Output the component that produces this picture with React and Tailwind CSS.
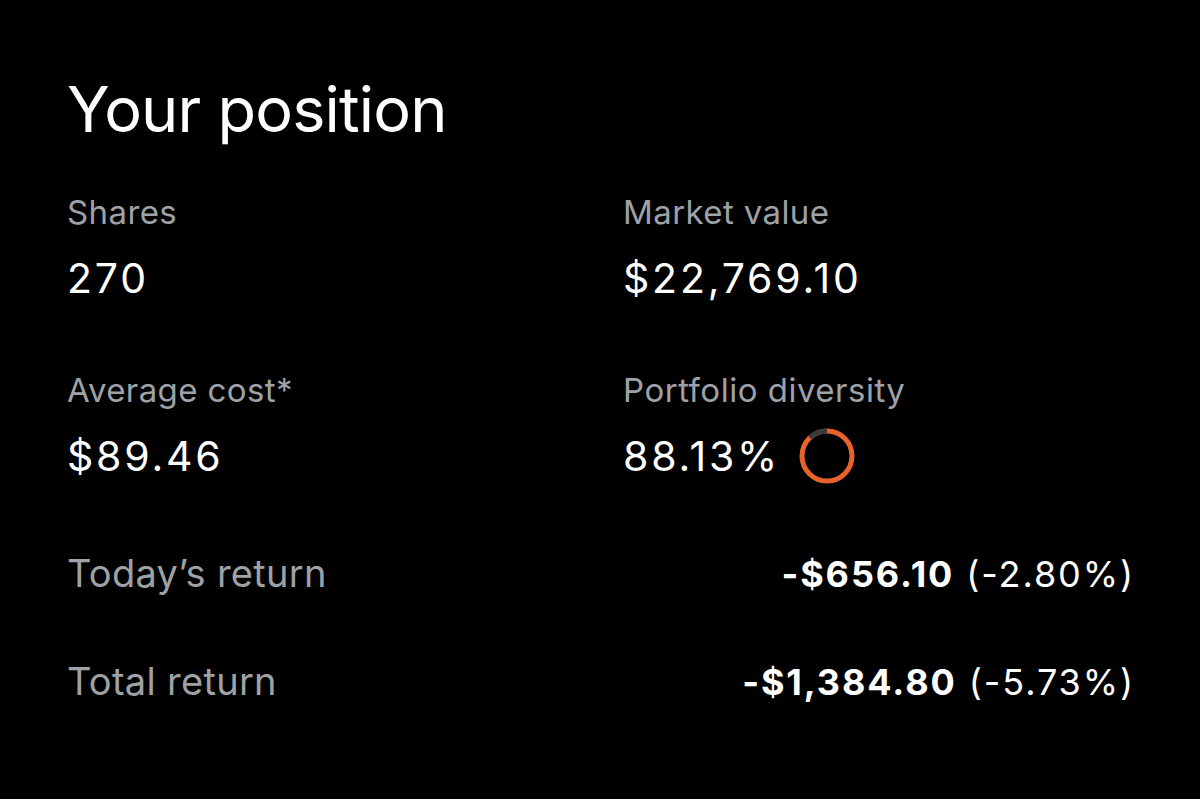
import React from 'react';

const font = { fontFamily: 'Inter, "Noto Sans", sans-serif' };

function DiversityRing() {
  return (
    <svg width="56" height="56" viewBox="0 0 56 56" className="shrink-0">
      <circle cx="28" cy="28" r="25" fill="none" stroke="#e8622c" strokeWidth="5" />
      <path d="M10.95 9.72 A25 25 0 0 1 28 3" fill="none" stroke="#3b3b3b" strokeWidth="5" />
    </svg>
  );
}

function Stat({ label, children }) {
  return (
    <div>
      <div className="text-[33px] leading-none tracking-[0.4px] text-[#9ea2a7]">{label}</div>
      <div className="mt-[29px] text-[41px] leading-none tracking-[2.8px] text-white">{children}</div>
    </div>
  );
}

function ReturnRow({ label, amount, pct, className }) {
  return (
    <div className={`flex items-baseline justify-between ${className}`}>
      <span className="text-[38px] leading-none tracking-[0.3px] text-[#9ea2a7]">{label}</span>
      <span className="text-[36px] leading-none tracking-[1.9px] text-white">
        <span className="font-bold">{amount}</span> {pct}
      </span>
    </div>
  );
}

export default function App() {
  return (
    <div className="min-h-[799px] w-full bg-black pl-[67px] pr-[65px] pt-[78px]" style={font}>
      <h1 className="text-[63px] leading-none text-white tracking-[-0.8px]">Your position</h1>

      <div className="mt-[55px] grid grid-cols-[556px_1fr] gap-y-[75px]">
        <Stat label="Shares">270</Stat>
        <Stat label="Market value">$22,769.10</Stat>
        <Stat label="Average cost*">$89.46</Stat>
        <div>
          <div className="text-[33px] leading-none tracking-[0.5px] text-[#9ea2a7]">Portfolio diversity</div>
          <div className="mt-[21px] flex items-center gap-[19px]">
            <span className="text-[41px] leading-none tracking-[2.8px] text-white">88.13%</span>
            <DiversityRing />
          </div>
        </div>
      </div>

      <ReturnRow className="mt-[70px]" label="Today’s return" amount="-$656.10" pct="(-2.80%)" />
      <ReturnRow className="mt-[70px]" label="Total return" amount="-$1,384.80" pct="(-5.73%)" />
    </div>
  );
}
